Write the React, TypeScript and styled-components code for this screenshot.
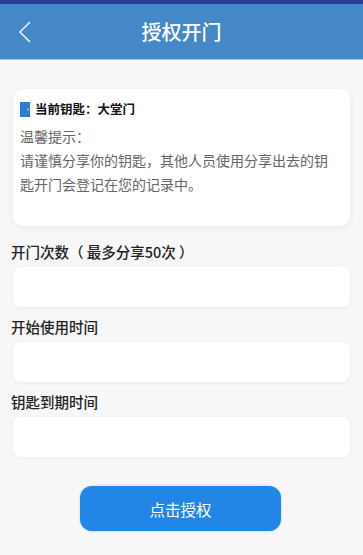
import React from "react";
import styled, { createGlobalStyle } from "styled-components";

const Global = createGlobalStyle`
  html, body { margin: 0; padding: 0; background: #f7f7f7; }
  body { font-family: "Noto Sans CJK SC", "Noto Sans", Roboto, sans-serif; }
  * { box-sizing: border-box; }
`;

const Page = styled.div`
  width: 363px;
  min-height: 555px;
  background: #f7f7f7;
  display: flex;
  flex-direction: column;
`;

const StatusBar = styled.div`
  height: 4px;
  background: #2c3d9c;
`;

const Header = styled.header`
  height: 56px;
  background: #4588c8;
  border-bottom: 1px solid #9cc6ea;
  display: flex;
  align-items: center;
  justify-content: center;
  position: relative;
`;

const Back = styled.button`
  position: absolute;
  left: 14px;
  top: 50%;
  transform: translateY(-50%);
  background: none;
  border: none;
  padding: 4px;
  display: flex;
`;

const Title = styled.h1`
  margin: 0;
  color: #ffffff;
  font-size: 20px;
  font-weight: 500;
  letter-spacing: 0;
`;

const Card = styled.section`
  margin: 29px 13px 0;
  background: #ffffff;
  border-radius: 10px;
  box-shadow: 0 2px 6px rgba(0, 0, 0, 0.06);
  padding: 12px 14px 30px 7px;
`;

const KeyRow = styled.div`
  display: flex;
  align-items: center;
  gap: 5px;
  height: 16px;
`;

const Door = styled.svg`
  flex: none;
  display: block;
  width: 10px;
  height: 15px;
`;

const KeyName = styled.span`
  font-size: 12.5px;
  font-weight: 700;
  color: #111;
  line-height: 16px;
`;

const Tip = styled.p`
  margin: 7px 0 0;
  font-size: 14px;
  line-height: 24px;
  color: #666;
  white-space: pre-line;
`;

const Form = styled.div`
  display: flex;
  flex-direction: column;
  padding: 0 13px 0 11px;
`;

const Label = styled.label<{ $first?: boolean }>`
  margin-top: ${(p) => (p.$first ? "16px" : "10px")};
  margin-bottom: 5px;
  font-size: 14.5px;
  font-weight: 500;
  line-height: 20px;
  color: #222;
`;

const Input = styled.input`
  margin-left: 2px;
  height: 40px;
  border: none;
  border-radius: 8px;
  background: #ffffff;
  box-shadow: 0 1px 4px rgba(0, 0, 0, 0.05);
  outline: none;
  font-size: 14px;
  padding: 0 10px;
`;

const Submit = styled.button`
  align-self: center;
  margin-top: 29px;
  width: 201px;
  height: 45px;
  border: none;
  border-radius: 12px;
  background: #2186e6;
  color: #ffffff;
  font-family: inherit;
  font-size: 15.5px;
  box-shadow: 0 0 2px rgba(80, 170, 255, 0.6);
`;

const DoorIcon = () => (
  <Door viewBox="0 0 10 15">
    <rect x="0" y="0" width="10" height="15" fill="#2a7fd0" />
    <rect x="7.6" y="6.6" width="1.2" height="1.6" fill="#ffffff" />
  </Door>
);

export default function App() {
  return (
    <Page>
      <Global />
      <StatusBar />
      <Header>
        <Back aria-label="返回">
          <svg width="14" height="24" viewBox="0 0 14 24">
            <path d="M12 2 L2 12 L12 22" fill="none" stroke="#ffffff" strokeWidth="1.4" />
          </svg>
        </Back>
        <Title>授权开门</Title>
      </Header>
      <Card>
        <KeyRow>
          <DoorIcon />
          <KeyName>当前钥匙：大堂门</KeyName>
        </KeyRow>
        <Tip>{"温馨提示：\n请谨慎分享你的钥匙，其他人员使用分享出去的钥匙开门会登记在您的记录中。"}</Tip>
      </Card>
      <Form>
        <Label $first>开门次数（ 最多分享50次 ）</Label>
        <Input />
        <Label>开始使用时间</Label>
        <Input />
        <Label>钥匙到期时间</Label>
        <Input />
        <Submit>点击授权</Submit>
      </Form>
    </Page>
  );
}
